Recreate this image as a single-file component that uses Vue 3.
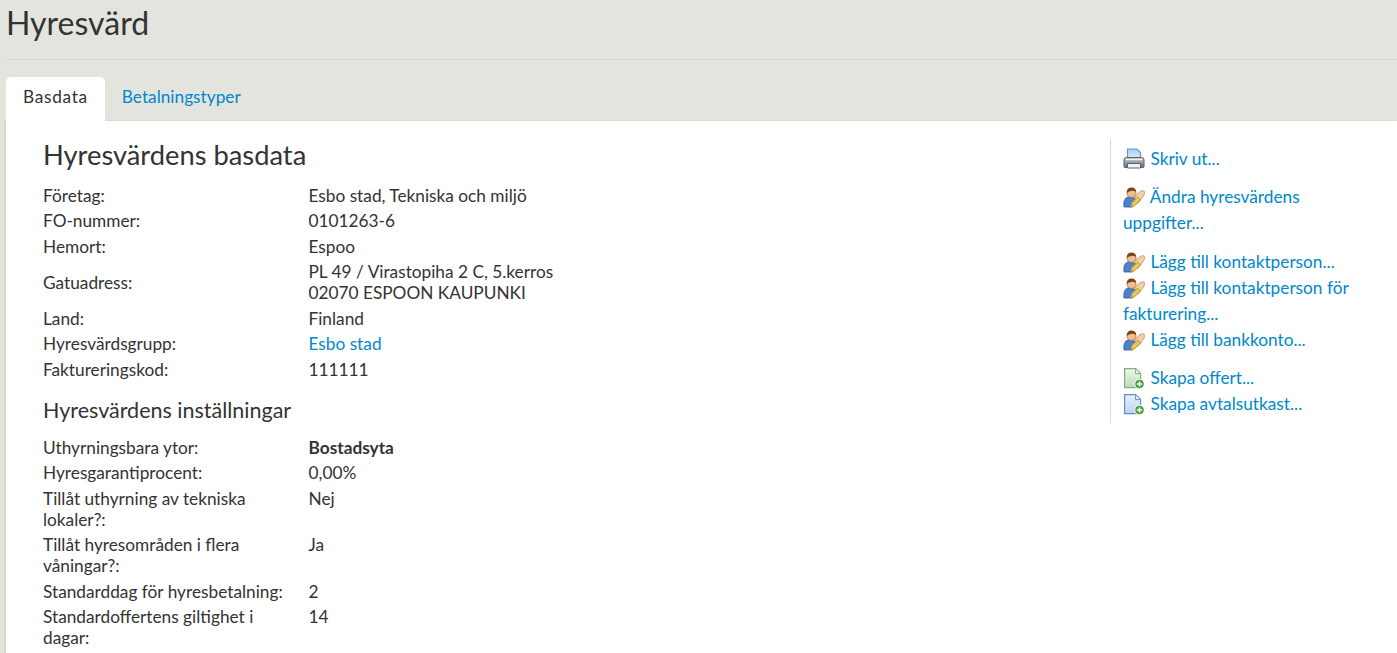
<template>
  <div class="page">
    <header class="page-header">
      <h1>Hyresvärd</h1>
    </header>
    <nav class="tabs">
      <div class="tab active">Basdata</div>
      <a class="tab" href="#">Betalningstyper</a>
    </nav>
    <main class="content">
      <section class="details">
        <h2>Hyresvärdens basdata</h2>
        <div class="rows">
          <div v-for="row in basicRows" :key="row.label" class="row">
            <div class="label">{{ row.label }}</div>
            <div class="value">
              <a v-if="row.link" href="#">{{ row.value }}</a>
              <template v-else>
                <div v-for="line in row.value.split('|')" :key="line">{{ line }}</div>
              </template>
            </div>
          </div>
        </div>
        <h3>Hyresvärdens inställningar</h3>
        <div class="rows top">
          <div v-for="row in settingRows" :key="row.label" class="row">
            <div class="label">{{ row.label }}</div>
            <div class="value" :class="{ strong: row.strong }">{{ row.value }}</div>
          </div>
        </div>
      </section>
      <aside class="actions">
        <svg class="defs" width="0" height="0">
          <defs>
            <linearGradient id="paper" x1="0" y1="0" x2="0" y2="1">
              <stop offset="0" stop-color="#a9cdf2" />
              <stop offset="1" stop-color="#e4eefa" />
            </linearGradient>
            <linearGradient id="printer" x1="0" y1="0" x2="0" y2="1">
              <stop offset="0" stop-color="#c9ced4" />
              <stop offset="1" stop-color="#666e78" />
            </linearGradient>
            <linearGradient id="doc-green" x1="0" y1="0" x2="0" y2="1">
              <stop offset="0" stop-color="#eef6ea" />
              <stop offset="1" stop-color="#bcdcb6" />
            </linearGradient>
            <linearGradient id="doc-blue" x1="0" y1="0" x2="0" y2="1">
              <stop offset="0" stop-color="#e8f1fd" />
              <stop offset="1" stop-color="#b9d2f5" />
            </linearGradient>
          </defs>
        </svg>
        <div v-for="(group, i) in actionGroups" :key="i" class="action-group">
          <a v-for="item in group" :key="item.text" class="action" href="#">
            <svg v-if="item.icon === 'print'" class="icon" viewBox="0 0 22 22">
              <path d="M4.500 1h9.500l3.500 3.500V11h-13z" fill="url(#paper)" stroke="#5f95d0" stroke-width="1.200" />
              <path d="M1 12q0-2.500 2.500-2.500h15Q21 9.500 21 12v6.500q0 1-1 1H2q-1 0-1-1z" fill="url(#printer)" stroke="#59606a" />
              <path d="M2.500 11.500h17" stroke="#eef0f2" stroke-width="1.200" />
              <path d="M4.500 15.500h13V20h-13z" fill="#f2f3f5" stroke="#59606a" />
            </svg>
            <svg v-else-if="item.icon === 'user'" class="icon" viewBox="0 0 22 22">
              <path d="M1 21q-1-8 3.500-10h5q3 1 3 4l-3 6z" fill="#4a82cf" stroke="#2b5a9c" stroke-width=".8" />
              <circle cx="8.500" cy="7" r="4.500" fill="#eebd90" stroke="#a86f42" stroke-width=".8" />
              <path d="M3.800 7Q3.500 1.500 8.500 1.500 13 1.500 13.200 6 10 4.200 7 5.200 5 6 3.800 7z" fill="#7a4418" />
              <path d="M12 11q4-6 7.500-6.500 2.500 0 2 3-.5 3-7 10z" fill="#f3d0a4" stroke="#c09362" stroke-width=".8" />
              <path d="M7.500 21l1.200-4.500 6-5.500 3 3-6 5.500z" fill="#e8c65a" stroke="#a8872a" stroke-width=".8" />
            </svg>
            <svg v-else class="icon" viewBox="0 0 22 22">
              <path d="M1.600 1.600h11l5 5v14h-16z" :fill="item.icon === 'offer' ? 'url(#doc-green)' : 'url(#doc-blue)'" :stroke="item.icon === 'offer' ? '#7fb07f' : '#5f8fd0'" stroke-width="1.200" />
              <path d="M12.600 1.600v5h5z" fill="#f6f9f6" :stroke="item.icon === 'offer' ? '#7fb07f' : '#5f8fd0'" />
              <circle cx="16.500" cy="17" r="4.800" fill="#4d9f40" stroke="#fff" />
              <path d="M16.500 14.400v5.200M13.900 17h5.200" stroke="#fff" stroke-width="1.600" />
            </svg>
            {{ item.text }}
          </a>
        </div>
      </aside>
    </main>
  </div>
</template>

<script setup>
const basicRows = [
  { label: 'Företag:', value: 'Esbo stad, Tekniska och miljö' },
  { label: 'FO-nummer:', value: '0101263-6' },
  { label: 'Hemort:', value: 'Espoo' },
  { label: 'Gatuadress:', value: 'PL 49 / Virastopiha 2 C, 5.kerros|02070 ESPOON KAUPUNKI' },
  { label: 'Land:', value: 'Finland' },
  { label: 'Hyresvärdsgrupp:', value: 'Esbo stad', link: true },
  { label: 'Faktureringskod:', value: '111111' }
]

const settingRows = [
  { label: 'Uthyrningsbara ytor:', value: 'Bostadsyta', strong: true },
  { label: 'Hyresgarantiprocent:', value: '0,00%' },
  { label: 'Tillåt uthyrning av tekniska lokaler?:', value: 'Nej' },
  { label: 'Tillåt hyresområden i flera våningar?:', value: 'Ja' },
  { label: 'Standarddag för hyresbetalning:', value: '2' },
  { label: 'Standardoffertens giltighet i dagar:', value: '14' }
]

const actionGroups = [
  [{ icon: 'print', text: 'Skriv ut...' }],
  [{ icon: 'user', text: 'Ändra hyresvärdens uppgifter...' }],
  [
    { icon: 'user', text: 'Lägg till kontaktperson...' },
    { icon: 'user', text: 'Lägg till kontaktperson för fakturering...' },
    { icon: 'user', text: 'Lägg till bankkonto...' }
  ],
  [
    { icon: 'offer', text: 'Skapa offert...' },
    { icon: 'draft', text: 'Skapa avtalsutkast...' }
  ]
]
</script>

<style>
html, body {
  margin: 0;
  background: #e3e4de;
  overflow: hidden;
}
</style>

<style scoped>
.page {
  height: 653px;
  overflow: hidden;
  background: #e3e4de;
  font-family: "Lato", "Liberation Sans", sans-serif;
  font-size: 17.25px;
  line-height: 21px;
  color: #333;
}

.page-header {
  margin-left: 6px;
  height: 59px;
  border-bottom: 1px solid #d5d6d0;
}

h1 {
  margin: 0;
  padding-top: 5px;
  font-size: 32px;
  line-height: 36px;
  font-weight: 400;
}

.tabs {
  display: flex;
  margin: 17px 0 0 6px;
  height: 44px;
}

.tab {
  padding: 0 17px;
  line-height: 39px;
  border-radius: 5px 5px 0 0;
}

.tab.active {
  background: #fff;
  letter-spacing: 0.7px;
}

a {
  color: #0088cc;
  text-decoration: none;
}

.content {
  display: flex;
  justify-content: space-between;
  margin-left: 6px;
  height: 532px;
  padding: 18px 0 0 37px;
  box-sizing: border-box;
  background: #fff;
  box-shadow: -1px 0 2px rgba(0, 0, 0, 0.12);
}

.details {
  width: 800px;
}

h2 {
  margin: 0 0 12.5px;
  font-size: 27.3px;
  line-height: 31px;
  font-weight: 400;
}

h3 {
  margin: 14.5px 0 12px;
  font-size: 21.5px;
  line-height: 26px;
  font-weight: 400;
}

.row {
  display: grid;
  grid-template-columns: 265.5px 1fr;
  align-items: center;
  padding: 2.25px 0;
}

.rows.top .row {
  align-items: start;
}

.label {
  padding-right: 15px;
}

.value.strong {
  font-weight: 700;
}

.actions {
  width: 287px;
  height: 284px;
  padding: 7px 30px 0 12px;
  box-sizing: border-box;
  border-left: 1px solid #d9d9d9;
  line-height: 26px;
}

.defs {
  position: absolute;
}

.action-group {
  margin-bottom: 12.4px;
}

.action {
  display: block;
}

.icon {
  width: 22px;
  height: 22px;
  margin-right: 1px;
  vertical-align: -5px;
}
</style>
